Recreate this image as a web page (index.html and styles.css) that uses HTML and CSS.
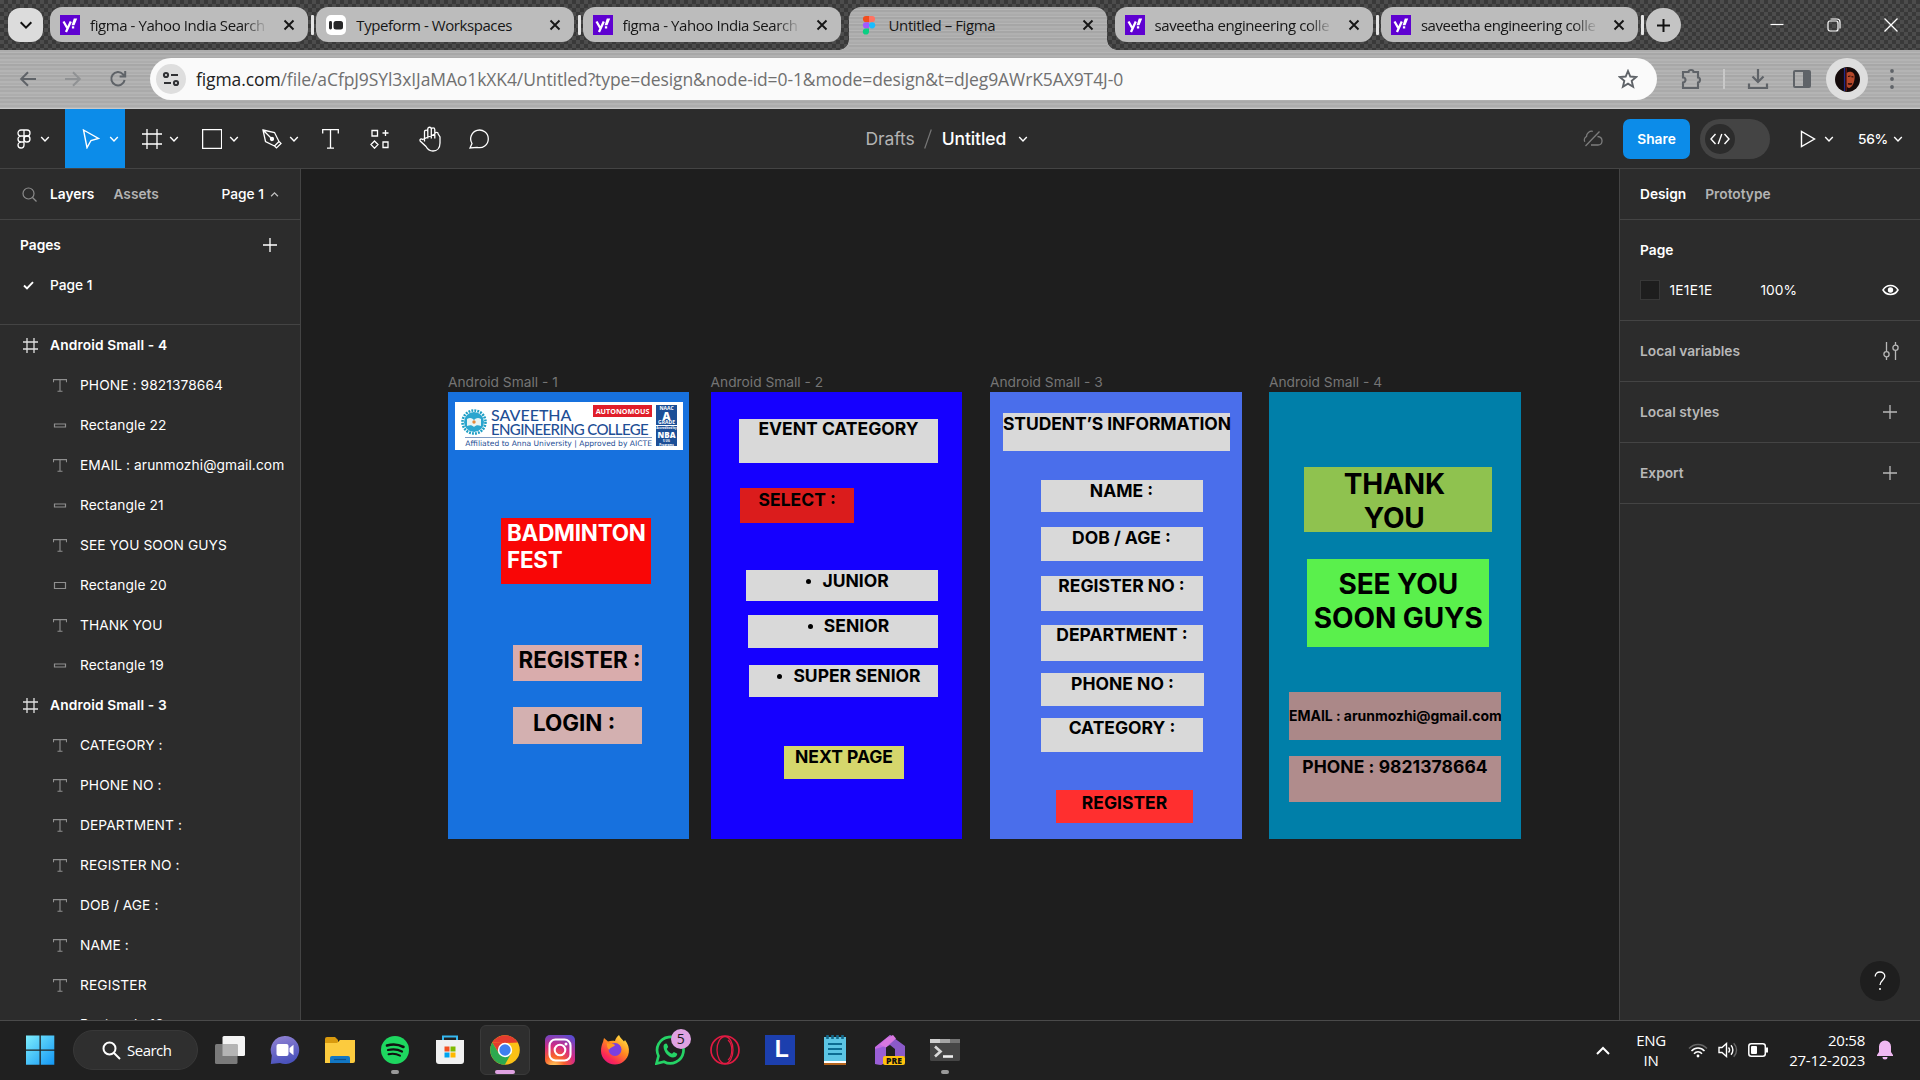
FILE: index.html
```html
<!DOCTYPE html>
<html lang="en">
<head>
<meta charset="utf-8">
<title>Untitled – Figma</title>
<link rel="stylesheet" href="styles.css">
</head>
<body>
<svg class="defs" width="0" height="0">
  <symbol id="chev" viewBox="0 0 10 10"><path d="M1.2 3l3.8 3.9L8.800 3" fill="none" stroke="currentColor" stroke-width="1.4"/></symbol>
  <symbol id="x" viewBox="0 0 12 12"><path d="M1.500 1.500l9 9M10.500 1.500l-9 9" fill="none" stroke="currentColor" stroke-width="1.900"/></symbol>
  <symbol id="yahoo" viewBox="0 0 20 20"><path fill="#5f01d1" d="M0 0h20v20H0z"/><path fill="none" stroke="#fff" stroke-width="2.300" d="M3.500 6.500l3.600 6.300M10.800 6.500L6 17"/><path fill="#fff" d="M13.800 3.500h3.400l-2.700 6.800h-2.900zM11.900 11.200h2.300v2.400h-2.300z"/></symbol>
  <symbol id="t" viewBox="0 0 14 13"><path d="M.5 3.200V.6h13v2.600M7 .6v11.600M4.500 12.200h5" fill="none" stroke="currentColor" stroke-width="1.100"/></symbol>
  <symbol id="r" viewBox="0 0 14 13"><path d="M1.500 5h11v3h-11z" fill="none" stroke="currentColor" stroke-width="1.200"/></symbol>
  <symbol id="r2" viewBox="0 0 14 13"><path d="M1.500 3.500h11v6h-11z" fill="none" stroke="currentColor" stroke-width="1.200"/></symbol>
  <symbol id="frame" viewBox="0 0 15 15"><path d="M4 0v15M11 0v15M0 4h15M0 11h15" fill="none" stroke="currentColor" stroke-width="1.300"/></symbol>
  <symbol id="plus" viewBox="0 0 14 14"><path d="M7 0v14M0 7h14" fill="none" stroke="currentColor" stroke-width="1.300"/></symbol>
</svg>

<header class="tabstrip">
  <button class="tabsearch"><svg width="14" height="14"><use href="#chev"/></svg></button>
  <div class="tab"><svg class="fav" width="20" height="20"><use href="#yahoo"/></svg><span class="ttl fade">figma - Yahoo India Search</span><svg class="cls" width="12" height="12"><use href="#x"/></svg></div>
  <i class="sep"></i>
  <div class="tab"><svg class="fav" width="20" height="20" viewBox="0 0 20 20"><rect width="20" height="20" rx="5" fill="#fff"/><rect x="3" y="6" width="3" height="8.500" rx="1.400" fill="#262627"/><rect x="7.500" y="6" width="9.500" height="8.500" rx="2.500" fill="#262627"/></svg><span class="ttl">Typeform - Workspaces</span><svg class="cls" width="12" height="12"><use href="#x"/></svg></div>
  <i class="sep"></i>
  <div class="tab"><svg class="fav" width="20" height="20"><use href="#yahoo"/></svg><span class="ttl fade">figma - Yahoo India Search</span><svg class="cls" width="12" height="12"><use href="#x"/></svg></div>
  <div class="tab active"><svg class="fav" width="20" height="20" viewBox="0 0 20 20"><path fill="#f24e1e" d="M10 1H7a3.100 3.100 0 0 0 0 6.200h3z"/><path fill="#ff7262" d="M10 1h3a3.100 3.100 0 0 1 0 6.200h-3z"/><path fill="#a259ff" d="M10 7.200H7a3.100 3.100 0 0 0 0 6.200h3z"/><circle cx="13.100" cy="10.300" r="3.100" fill="#1abcfe"/><path fill="#0acf83" d="M10 13.400H7a3.100 3.100 0 1 0 3 3.100z"/></svg><span class="ttl">Untitled – Figma</span><svg class="cls" width="12" height="12"><use href="#x"/></svg></div>
  <div class="tab"><svg class="fav" width="20" height="20"><use href="#yahoo"/></svg><span class="ttl fade">saveetha engineering colle</span><svg class="cls" width="12" height="12"><use href="#x"/></svg></div>
  <i class="sep"></i>
  <div class="tab last"><svg class="fav" width="20" height="20"><use href="#yahoo"/></svg><span class="ttl fade">saveetha engineering colle</span><svg class="cls" width="12" height="12"><use href="#x"/></svg></div>
  <i class="sep"></i>
  <button class="newtab"><svg width="13" height="13" viewBox="0 0 13 13"><path d="M6.500 0v13M0 6.500h13" stroke="#111" stroke-width="2"/></svg></button>
  <div class="winctl">
    <svg width="14" height="14" viewBox="0 0 14 14"><path d="M.5 6.500h13" stroke="#fff" stroke-width="1.200"/></svg>
    <svg width="14" height="14" viewBox="0 0 14 14" fill="none" stroke="#fff" stroke-width="1.200"><rect x="1" y="3" width="10" height="10" rx="2"/><path d="M3.500 1H10a3 3 0 0 1 3 3v6.500"/></svg>
    <svg width="14" height="14" viewBox="0 0 14 14"><path d="M.5.5l13 13M13.500.5l-13 13" stroke="#fff" stroke-width="1.300"/></svg>
  </div>
</header>

<div class="navbar">
  <div class="navbtns">
    <svg width="20" height="20" viewBox="0 0 20 20" fill="none" stroke="#5f6368" stroke-width="2"><path d="M18 10H3.500M10 3.200L3.200 10l6.800 6.800"/></svg>
    <svg width="20" height="20" viewBox="0 0 20 20" fill="none" stroke="#909294" stroke-width="2"><path d="M2 10h14.500M10 3.200l6.800 6.800-6.800 6.800"/></svg>
    <svg width="20" height="20" viewBox="0 0 20 20" fill="none" stroke="#5f6368" stroke-width="2"><path d="M16.600 11A6.700 6.700 0 1 1 15 5.300l1.800 1.900M17.200 2v5.600h-5.600"/></svg>
  </div>
  <div class="omnibox">
    <span class="siteinfo"><svg width="18" height="16" viewBox="0 0 18 16" fill="none" stroke="#303134" stroke-width="2"><circle cx="4" cy="4" r="2.100"/><path d="M9 4h7M2 12h7"/><circle cx="14" cy="12" r="2.100"/></svg></span>
    <span class="url"><b>figma.com</b>/file/aCfpJ9SYl3xIJaMAo1kXK4/Untitled?type=design&amp;node-id=0-1&amp;mode=design&amp;t=dJeg9AWrK5AX9T4J-0</span>
    <svg class="star" width="20" height="20" viewBox="0 0 20 20"><path d="M10 2l2.300 5.500 5.900.5-4.500 3.900 1.400 5.800L10 14.600l-5.100 3.100 1.400-5.800L1.800 8l5.900-.5z" fill="none" stroke="#5f6368" stroke-width="1.900"/></svg>
  </div>
  <div class="exts">
    <svg class="puz" width="24" height="24" viewBox="0 0 24 24"><path d="M4 5h5.500a2.500 2 0 0 1 5 0H19v5.500a2 2.500 0 0 1 0 5V21H4v-5.500a2.500 2.500 0 0 0 0-5z" fill="none" stroke="#5f6368" stroke-width="2.100"/></svg>
    <i></i>
    <svg class="dl" width="22" height="22" viewBox="0 0 22 22" fill="none" stroke="#5f6368" stroke-width="2.200"><path d="M11 1v13M5.500 8.500L11 14l5.500-5.500M2 15.500V20h18v-4.500"/></svg>
    <svg class="sp" width="20" height="20" viewBox="0 0 20 20"><rect x="2" y="2" width="16" height="16" rx="1" fill="none" stroke="#5f6368" stroke-width="2"/><path d="M11 2h7v16h-7z" fill="#5f6368"/></svg>
    <span class="avatar"><svg width="25" height="25" viewBox="0 0 25 25"><circle cx="12.500" cy="12.500" r="12.500" fill="#140a0a"/><path d="M11.500 6c4-3 8.500-.5 8.200 4-.2 5.500-2.500 10.500-5.500 11-2 0-2.700-2-2.700-4z" fill="#b5482a"/><path d="M13 9.500l2.500-.5M16.500 9.600l2 .4M13 16.500c1 1 3 1 4 0" stroke="#2a0d0a" stroke-width="1.200"/><path d="M9.500 1v23" stroke="#1c2c8c" stroke-width="1.200"/><path d="M11.200 1v23" stroke="#7a1a18"/></svg></span>
    <svg class="dots" width="4" height="22" viewBox="0 0 4 22" fill="#5f6368"><circle cx="2" cy="3" r="1.900"/><circle cx="2" cy="11" r="1.900"/><circle cx="2" cy="19" r="1.900"/></svg>
  </div>
</div>

<div class="toolbar">
  <div class="tools">
    <div class="tool w65"><svg width="14" height="20" viewBox="0 0 14 20" fill="none" stroke="#fff" stroke-width="1.300"><path d="M7 1H4a3 3 0 0 0 0 6h3zM7 1h3a3 3 0 0 1 0 6H7zM7 7H4a3 3 0 0 0 0 6h3zM7 13H4a3 3 0 1 0 3 3z"/><circle cx="10" cy="10" r="3"/></svg><svg class="cv" width="10" height="10"><use href="#chev"/></svg></div>
    <div class="tool w60 on"><svg width="18" height="20" viewBox="0 0 18 20"><path d="M1.500 1l15 8.500-7.500 2L5 18.700z" fill="none" stroke="#fff" stroke-width="1.400"/></svg><svg class="cv" width="10" height="10"><use href="#chev"/></svg></div>
    <div class="tool w60"><svg width="20" height="20" viewBox="0 0 20 20"><path d="M5 0v20M15 0v20M0 5h20M0 15h20" stroke="#fff" stroke-width="1.300"/></svg><svg class="cv" width="10" height="10"><use href="#chev"/></svg></div>
    <div class="tool w60"><svg width="20" height="20" viewBox="0 0 20 20"><rect x=".6" y=".6" width="19" height="18.800" fill="none" stroke="#fff" stroke-width="1.300"/></svg><svg class="cv" width="10" height="10"><use href="#chev"/></svg></div>
    <div class="tool w60"><svg width="20" height="20" viewBox="0 0 20 20" fill="none" stroke="#fff" stroke-width="1.300"><path d="M1 1l11.500 2.500 4.500 9-4.500 4.500-9-4.500zM1 1l8 8M12.800 17.200l1.700 1.700 4.500-4.500-1.700-1.700"/><circle cx="10" cy="10" r="1.500" fill="#fff"/></svg><svg class="cv" width="10" height="10"><use href="#chev"/></svg></div>
    <div class="tool w50"><svg width="17" height="20" viewBox="0 0 17 20"><path d="M.7 4.500V.7h15.600v3.800M8.500.7v18.500M5 19.200h7" fill="none" stroke="#fff" stroke-width="1.300"/></svg></div>
    <div class="tool w50"><svg width="20" height="20" viewBox="0 0 20 20" fill="none" stroke="#fff" stroke-width="1.300"><path d="M2 1.500h5.500V7H2zM13 13h5v5.500h-5zM15.500 1v6M12.500 4h6M4.500 12L8 15.600l-3.500 3.600L1 15.600z"/></svg></div>
    <div class="tool w50"><svg width="23" height="26" viewBox="0 0 23 26" fill="none" stroke="#fff" stroke-width="1.300"><path d="M5.500 15.500V5.700a1.600 1.600 0 0 1 3.300 0V12.500 3a1.700 1.700 0 0 1 3.500 0v9.500V3.700a1.700 1.700 0 0 1 3.500 0V12.500M15.800 8a1.700 1.700 0 0 1 3.400 0l1.800 3V17c0 5-3 8-7 8-4 0-5.500-1.700-7-4.500L1.200 15c-.8-1.800 1-2.800 2.300-1.500z"/></svg></div>
    <div class="tool w50"><svg width="22" height="20" viewBox="0 0 22 20"><path d="M1 19l2-4.500A8.800 8.800 0 1 1 8 18.300z" fill="none" stroke="#fff" stroke-width="1.300"/></svg></div>
  </div>
  <div class="doc"><span class="drafts">Drafts</span><svg width="8" height="20" viewBox="0 0 8 20"><path d="M7.300.5L.7 19.500" stroke="#777" stroke-width="1.200"/></svg><span>Untitled</span><svg class="dcv" width="10" height="10"><use href="#chev"/></svg></div>
  <div class="actions">
    <svg width="20" height="20" viewBox="0 0 20 20" fill="none" stroke="#7d7d7d" stroke-width="1.300"><path d="M2.500 17L16.500 2.500M1.800 12.800a4 4 0 0 1 1.700-5.300C3.500 4 6.500 1.800 9.800 2.300M14.500 7.500c3 .3 4.700 2.200 4.500 4.700s-2 3.800-4 3.800H8"/></svg>
    <button class="share">Share</button>
    <div class="toggle"><span><svg width="20" height="12" viewBox="0 0 20 12" fill="none" stroke="#fff" stroke-width="1.400"><path d="M5.500 1L1 6l4.500 5M14.500 1L19 6l-4.500 5M11.800 1L8.200 11"/></svg></span></div>
    <svg class="play" width="16" height="18" viewBox="0 0 16 18"><path d="M1.500 1.500v15L14.500 9z" fill="none" stroke="#fff" stroke-width="1.400"/></svg>
    <svg class="c1" width="10" height="10"><use href="#chev"/></svg>
    <span class="zoom">56%</span>
    <svg class="c2" width="10" height="10"><use href="#chev"/></svg>
  </div>
</div>

<main class="work">
  <aside class="left">
    <div class="ltabs"><svg width="15" height="15" viewBox="0 0 15 15" fill="none" stroke="#8c8c8c" stroke-width="1.200"><circle cx="6.500" cy="6.500" r="5.500"/><path d="M10.500 10.500l4 4"/></svg><b>Layers</b><b class="dim">Assets</b><span class="pg">Page 1</span><svg class="up" width="9" height="9"><use href="#chev"/></svg></div>
    <div class="pages">
      <div class="ph"><b>Pages</b><svg width="14" height="14"><use href="#plus"/></svg></div>
      <div class="prow"><svg width="11" height="9" viewBox="0 0 11 9"><path d="M1 4.500l3 3L10 1.200" fill="none" stroke="#fff" stroke-width="1.900"/></svg><span>Page 1</span></div>
    </div>
    <div class="layers">
      <div class="lr top"><svg width="15" height="15"><use href="#frame"/></svg>Android Small - 4</div>
      <div class="lr"><svg width="14" height="13"><use href="#t"/></svg>PHONE : 9821378664</div>
      <div class="lr"><svg width="14" height="13"><use href="#r"/></svg>Rectangle 22</div>
      <div class="lr"><svg width="14" height="13"><use href="#t"/></svg>EMAIL : arunmozhi@gmail.com</div>
      <div class="lr"><svg width="14" height="13"><use href="#r"/></svg>Rectangle 21</div>
      <div class="lr"><svg width="14" height="13"><use href="#t"/></svg>SEE YOU SOON GUYS</div>
      <div class="lr"><svg width="14" height="13"><use href="#r2"/></svg>Rectangle 20</div>
      <div class="lr"><svg width="14" height="13"><use href="#t"/></svg>THANK YOU</div>
      <div class="lr"><svg width="14" height="13"><use href="#r"/></svg>Rectangle 19</div>
      <div class="lr top"><svg width="15" height="15"><use href="#frame"/></svg>Android Small - 3</div>
      <div class="lr"><svg width="14" height="13"><use href="#t"/></svg>CATEGORY :</div>
      <div class="lr"><svg width="14" height="13"><use href="#t"/></svg>PHONE NO :</div>
      <div class="lr"><svg width="14" height="13"><use href="#t"/></svg>DEPARTMENT :</div>
      <div class="lr"><svg width="14" height="13"><use href="#t"/></svg>REGISTER NO :</div>
      <div class="lr"><svg width="14" height="13"><use href="#t"/></svg>DOB / AGE :</div>
      <div class="lr"><svg width="14" height="13"><use href="#t"/></svg>NAME :</div>
      <div class="lr"><svg width="14" height="13"><use href="#t"/></svg>REGISTER</div>
      <div class="lr end"><svg width="14" height="13"><use href="#r"/></svg>Rectangle 18</div>
    </div>
  </aside>

  <section class="canvas">
    <article class="board b1">
      <h2>Android Small - 1</h2>
      <div class="logo">
        <svg class="seal" width="26" height="26" viewBox="0 0 26 26"><circle cx="13" cy="13" r="11.500" fill="none" stroke="#1f9fc4" stroke-width="2.600" stroke-dasharray="1.900 1.110"/><circle cx="13" cy="13" r="10" fill="#2ba6cf"/><path d="M6 10c3-2 5-1 7 1 2-2 4-3 7-1v7c-3-1-5-1-7 1-2-2-4-2-7-1z" fill="#e8f4f4"/><circle cx="13" cy="13" r="1.700" fill="#e58a3c"/></svg>
        <div class="lname"><span class="l1">SAVEETHA</span><em>AUTONOMOUS</em><span class="l2">ENGINEERING COLLEGE</span><span class="l3">Affiliated to Anna University | Approved by AICTE</span></div>
        <div class="naac"><div><span>NAAC</span><strong>A</strong><span>GRADE</span></div><div class="nba"><small>Accredited by</small><strong>NBA</strong><small>5 UG Programs</small></div></div>
      </div>
      <div class="node n-bad">BADMINTON<br>FEST</div>
      <div class="node n-reg">REGISTER :</div>
      <div class="node n-log">LOGIN :</div>
    </article>
    <article class="board b2">
      <h2>Android Small - 2</h2>
      <div class="node n-event">EVENT CATEGORY</div>
      <div class="node n-select">SELECT :</div>
      <div class="node n-jun"><i></i>JUNIOR</div>
      <div class="node n-sen"><i></i>SENIOR</div>
      <div class="node n-sup"><i></i>SUPER SENIOR</div>
      <div class="node n-next">NEXT PAGE</div>
    </article>
    <article class="board b3">
      <h2>Android Small - 3</h2>
      <div class="node n-stu">STUDENT’S INFORMATION</div>
      <div class="node n-name">NAME :</div>
      <div class="node n-dob">DOB / AGE :</div>
      <div class="node n-rno">REGISTER NO :</div>
      <div class="node n-dep">DEPARTMENT :</div>
      <div class="node n-pno">PHONE NO :</div>
      <div class="node n-cat">CATEGORY :</div>
      <div class="node n-go">REGISTER</div>
    </article>
    <article class="board b4">
      <h2>Android Small - 4</h2>
      <div class="node n-thx">THANK<br>YOU</div>
      <div class="node n-see">SEE YOU<br>SOON GUYS</div>
      <div class="node n-mail">EMAIL : arunmozhi@gmail.com</div>
      <div class="node n-tel">PHONE : 9821378664</div>
    </article>
  </section>

  <aside class="right">
    <div class="rtabs"><b>Design</b><b class="dim">Prototype</b></div>
    <div class="rpage">
      <b>Page</b>
      <div class="fill"><i></i><span class="hex">1E1E1E</span><span>100%</span><svg width="17" height="12" viewBox="0 0 17 12"><path d="M1 6c3.500-6 11.500-6 15 0-3.500 6-11.500 6-15 0z" fill="none" stroke="#fff" stroke-width="1.500"/><circle cx="8.500" cy="6" r="2.700" fill="#fff"/></svg></div>
    </div>
    <div class="rrow vars"><b>Local variables</b><svg width="16" height="18" viewBox="0 0 16 18" fill="none" stroke="#b8b8b8" stroke-width="1.300"><path d="M3.500 0v9.500M3.500 15v3M12.500 0v3M12.500 8.500V18"/><circle cx="3.500" cy="12.200" r="2.600"/><circle cx="12.500" cy="5.800" r="2.600"/></svg></div>
    <div class="rrow"><b>Local styles</b><svg width="14" height="14"><use href="#plus"/></svg></div>
    <div class="rrow"><b>Export</b><svg width="14" height="14"><use href="#plus"/></svg></div>
    <button class="help"><svg width="12" height="20" viewBox="0 0 12 20"><path d="M1.200 5.500C1.200 2.800 3.200 1 6 1s4.800 1.800 4.800 4.300C10.800 9 6 9.500 6 14" fill="none" stroke="#fff" stroke-width="1.300"/><circle cx="6" cy="18" r="1" fill="#fff"/></svg></button>
  </aside>
</main>

<footer class="taskbar">
  <div class="start"><svg width="30" height="30" viewBox="0 0 30 30"><defs><linearGradient id="wg" x1="0" y1="0" x2="1" y2="1"><stop offset="0" stop-color="#7eeefd"/><stop offset="1" stop-color="#1397f5"/></linearGradient></defs><path fill="url(#wg)" d="M1 .5h13.500v14H1zM15.800.5h13.500v14H15.800zM1 15.700h13.500v14H1zM15.800 15.700h13.500v14H15.800z"/></svg></div>
  <div class="search"><svg width="19" height="19" viewBox="0 0 19 19" fill="none" stroke="#fff" stroke-width="2"><circle cx="7.500" cy="7.500" r="6"/><path d="M12 12l6 6"/></svg><span>Search</span></div>
  <div class="apps">
    <div class="app"><svg width="30" height="30" viewBox="0 0 30 30"><rect x="7.500" y="1" width="22.500" height="20" rx="1.500" fill="#f4f4f4"/><rect x="0" y="9" width="22.500" height="20" rx="1.500" fill="#7a7a7a"/><path d="M7.500 9h15v12h-15z" fill="#b4b4b4"/></svg></div>
    <div class="app"><svg width="30" height="30" viewBox="0 0 30 30"><defs><linearGradient id="cg" x1="0" y1="0" x2="0.300" y2="1"><stop offset="0" stop-color="#9585d4"/><stop offset="1" stop-color="#4b53bc"/></linearGradient></defs><path d="M15 1a14 14 0 1 1-5 27L.8 29l1-8.500A14 14 0 0 1 15 1z" fill="url(#cg)"/><rect x="6.500" y="9" width="12" height="12" rx="2" fill="#fff"/><path d="M19.500 13l4-3.200v10.400l-4-3.200z" fill="#fff"/></svg></div>
    <div class="app"><svg width="32" height="30" viewBox="0 0 32 30"><path d="M1 4a2 2 0 0 1 2-2h8l3 3v4H1z" fill="#d99a0e"/><path d="M1 8h12l3-3h15v21a2 2 0 0 1-2 2H1z" fill="#fccb3e"/><path d="M6 28v-5a2 2 0 0 1 2-2h16a2 2 0 0 1 2 2v5z" fill="#1277c4"/><path d="M10 24.500h12" stroke="#0b4f8a" stroke-width="1.200"/></svg></div>
    <div class="app"><svg width="30" height="30" viewBox="0 0 30 30"><circle cx="15" cy="15" r="14" fill="#1ed760"/><g fill="none" stroke="#111" stroke-linecap="round"><path d="M7 10.500c5.500-1.700 11.500-1.200 16.500 1.500" stroke-width="2.600"/><path d="M8 15c5-1.300 9.800-.8 14 1.500" stroke-width="2.200"/><path d="M8.500 19.300c4.300-1 8-.5 11.500 1.400" stroke-width="1.900"/></g></svg><i class="dot"></i></div>
    <div class="app"><svg width="30" height="30" viewBox="0 0 30 30"><path d="M8 6V1.500h14V6" fill="none" stroke="#35b7f0" stroke-width="2"/><path d="M1 5h28v21a3 3 0 0 1-3 3H4a3 3 0 0 1-3-3z" fill="#f1f1f1"/><path fill="#f25022" d="M9.500 11.500h5v5h-5z"/><path fill="#7fba00" d="M15.500 11.500h5v5h-5z"/><path fill="#00a4ef" d="M9.500 17.500h5v5h-5z"/><path fill="#ffb900" d="M15.500 17.500h5v5h-5z"/></svg></div>
    <div class="app cur"><svg width="30" height="30" viewBox="0 0 30 30"><circle cx="15" cy="15" r="14.800" fill="#fbc116"/><path d="M2.200 7.500A14.800 14.800 0 0 1 27.800 7.600L15 8z" fill="#e33b2e"/><path d="M2.200 7.500L15 8l-6 10.500z" fill="#e33b2e"/><path d="M2.200 7.500A14.800 14.800 0 0 0 14.800 29.800L21 18.800 9 18.500z" fill="#2da94f"/><circle cx="15" cy="15" r="7.200" fill="#fff"/><circle cx="15" cy="15" r="5.700" fill="#3e7fee"/></svg><i class="dot long"></i></div>
    <div class="app"><svg width="30" height="30" viewBox="0 0 30 30"><defs><radialGradient id="ig" cx=".3" cy="1.050" r="1.150"><stop offset="0" stop-color="#fed562"/><stop offset=".3" stop-color="#f9622c"/><stop offset=".6" stop-color="#d42b84"/><stop offset="1" stop-color="#5b4bd0"/></radialGradient></defs><rect width="30" height="30" rx="5" fill="url(#ig)"/><g fill="none" stroke="#fff" stroke-width="2.100"><rect x="4.500" y="4.500" width="21" height="21" rx="6"/><circle cx="15" cy="15" r="5.300"/></g><circle cx="21" cy="9" r="1.500" fill="#fff"/></svg></div>
    <div class="app"><svg width="30" height="30" viewBox="0 0 30 30"><defs><linearGradient id="fg" x1=".9" y1="0" x2=".2" y2="1"><stop offset="0" stop-color="#fff04a"/><stop offset=".45" stop-color="#ff8a1f"/><stop offset=".8" stop-color="#fb2a55"/><stop offset="1" stop-color="#e3137e"/></linearGradient></defs><path d="M3 7l1-4 4 3.500c2-.8 5-1 7-.5C15.500 3.500 17 1.500 19 0c1 3 4 5 5 6.500l1-1.500c3 4 4.500 8 3.800 12.500C27.700 25 21.500 29.500 15 29.500 7.500 29.500 1 23.500 1 16c0-3.500.8-6.500 2-9z" fill="url(#fg)"/><circle cx="15" cy="14.500" r="6.500" fill="#7b3fe0"/><path d="M7 8c3 1.500 6 0 8 2-1 2-4 1.500-6 5-1.500-2-2.500-4-2-7z" fill="#ff9a22"/></svg></div>
    <div class="app"><svg width="30" height="30" viewBox="0 0 30 30"><path d="M1.500 28.500L3.500 21A13.200 13.200 0 1 1 9 26.700z" fill="none" stroke="#25d366" stroke-width="2.700"/><path d="M8.500 11c1-3 3.300-2.800 3.700-1.500l1 2.500-1.400 2c1.200 2.500 3 4 5.200 4.800l1.900-1.800 3 1.500c1 .6-.5 4-3.900 4-4.500-.3-9.500-5.500-9.500-11.500z" fill="#25d366"/></svg><b class="badge">5</b></div>
    <div class="app"><svg width="30" height="30" viewBox="0 0 30 30" fill="none" stroke="#e01a42"><circle cx="15" cy="15" r="14" stroke-width="1.700"/><ellipse cx="15" cy="15" rx="8" ry="13.500" stroke-width="1.300"/><path d="M18 5c5 4 5 16 0 20" stroke-width="1.200"/></svg></div>
    <div class="app"><span class="ell">L</span></div>
    <div class="app"><svg width="24" height="30" viewBox="0 0 24 30"><path d="M1 2h22v26H1z" fill="#5cc5e4"/><path d="M1 26h22v2H1z" fill="#fff"/><path d="M1 28h22v2H1z" fill="#b5651d"/><path d="M5 9h14M5 14h14M5 19h14" stroke="#0c6c92" stroke-width="1.800"/><path d="M4.500 0v4M9.500 0v4M14.500 0v4M19.500 0v4" stroke="#15698b" stroke-width="2.600"/></svg></div>
    <div class="app"><svg width="30" height="30" viewBox="0 0 30 30"><path d="M0 29V12L15 0l5 3-9 9v15l-4 2.500z" fill="#c56be4"/><path d="M0 29V14l11-3v15l-5 4z" fill="#9a5fd6"/><path d="M15 0l15 11v11H20V14l-5-4-4 2z" fill="#8b5ac9"/><path d="M12 3L18 0l3 3.500-10 9-6-3z" fill="#d878e0"/></svg><b class="pre">PRE</b></div>
    <div class="app"><svg width="30" height="24" viewBox="0 0 30 24"><rect y="1" width="30" height="22" rx="1.500" fill="#454545"/><path d="M0 1h10v4H0z" fill="#d0d0d0"/><path d="M10 1h10v4H10z" fill="#a5a5a5"/><path d="M20 1h10v4H20z" fill="#737373"/><path d="M5 8.500l5.500 5L5 18.500" fill="none" stroke="#d8d8d8" stroke-width="2.700"/><path d="M13 18.500h10" stroke="#eee" stroke-width="2.600"/></svg><i class="dot"></i></div>
  </div>
  <div class="tray">
    <svg class="tchev" width="14" height="9" viewBox="0 0 14 9"><path d="M1 8l6-6 6 6" fill="none" stroke="#fff" stroke-width="2"/></svg>
    <div class="lang">ENG<br>IN</div>
    <svg class="wifi" width="20" height="16" viewBox="0 0 20 16" fill="none" stroke="#fff" stroke-width="1.500"><path d="M1 6.500c5-5.500 13-5.500 18 0" stroke="#666"/><path d="M3.500 9c3.700-4 9.300-4 13 0M6 11.700c2.300-2.500 5.700-2.500 8 0"/><circle cx="10" cy="14" r="1.400" fill="#fff" stroke="none"/></svg>
    <svg class="vol" width="20" height="16" viewBox="0 0 20 16" fill="none" stroke="#fff" stroke-width="1.400"><path d="M1 5.500h3l4.500-4v13L4 10.500H1zM10.500 5.500c1.300 1.500 1.300 3.500 0 5M13 3.300c2.500 2.700 2.500 6.700 0 9.400"/><path d="M15.700 1.200c3.800 4 3.800 9.600 0 13.600" stroke="#666"/></svg>
    <svg class="bat" width="21" height="14" viewBox="0 0 21 14"><rect x=".8" y=".8" width="16.500" height="12.400" rx="2.500" fill="none" stroke="#fff" stroke-width="1.500"/><rect x="3" y="3" width="6" height="8" rx="1" fill="#fff"/><path d="M18 4.500h2v5h-2z" fill="#fff"/></svg>
    <div class="clock">20:58<br>27-12-2023</div>
    <svg width="16" height="20" viewBox="0 0 16 20"><path d="M8 .5a6 6 0 0 1 6 6V12l2 3v1H0v-1l2-3V6.500a6 6 0 0 1 6-6zM5.500 17h5a2.500 2.500 0 0 1-5 0z" fill="#f0b8f2"/></svg>
  </div>
</footer>
</body>
</html>
```

FILE: styles.css
```css
* { box-sizing: border-box; }
body {
  margin: 0;
  width: 1920px;
  height: 1080px;
  overflow: hidden;
  display: flex;
  flex-direction: column;
  background: #1e1e1e;
  color: #fff;
  font: 500 13.75px/20px Inter, "Liberation Sans", sans-serif;
}
svg { display: block; flex: none; }
.defs { position: absolute; }
button { border: 0; padding: 0; color: inherit; font: inherit; display: flex; align-items: center; justify-content: center; }
i { font-style: normal; }

/* Browser tab strip */
.tabstrip {
  height: 50px;
  flex: none;
  display: flex;
  padding: 7px 22px 0 8px;
  background: repeating-conic-gradient(#393939 0 25%, #4c4c4c 0 50%) 0 0 / 8px 8px;
  font: 400 15px/20px "Open Sans", sans-serif;
  color: #161616;
}
.tabsearch { width: 35px; height: 34px; margin: 1px 7px 0 0; border-radius: 12px; background: #dcdcdc; color: #111; }
.tab { width: 258px; height: 35px; flex: none; display: flex; align-items: center; padding: 0 13px 0 10px; border-radius: 12px; background: #bcbcbc; }
.tab.last { width: 257px; }
.fav { margin-right: 10px; }
.ttl { flex: 1; overflow: hidden; white-space: nowrap; letter-spacing: -0.42px; }
.fade { -webkit-mask-image: linear-gradient(90deg, #000 86%, transparent); mask-image: linear-gradient(90deg, #000 86%, transparent); }
.cls { margin-left: 15px; }
.sep { width: 3px; height: 20px; flex: none; margin: 8px 2px 0 3.300px; background: #e4e4e4; border-radius: 1px; }
.tab.active {
  position: relative;
  height: 43px;
  margin: 0 8px;
  padding: 0 13px 8px 10px;
  border-radius: 12px 12px 0 0;
  background: repeating-linear-gradient(#ababab 0 2px, #b5b5b5 2px 3px, #a6a6a6 3px 5px, #b0b0b0 5px 7px);
}
.tab.active::before, .tab.active::after { content: ""; position: absolute; bottom: 0; width: 10px; height: 10px; }
.tab.active::before { left: -10px; background: radial-gradient(circle at 0 0, transparent 9.500px, #adadad 10px); }
.tab.active::after { right: -10px; background: radial-gradient(circle at 100% 0, transparent 9.500px, #adadad 10px); }
.newtab { width: 35px; height: 34px; margin: 1px 0 0; border-radius: 17px; background: #c4c4c4; }
.winctl { margin-left: auto; height: 36px; display: flex; align-items: center; gap: 43px; }

/* Navigation bar */
.navbar {
  height: 59px;
  flex: none;
  display: flex;
  align-items: center;
  background: repeating-linear-gradient(#adadad 0 2px, #b6b6b6 2px 3px, #a7a7a7 3px 5px, #b1b1b1 5px 7px, #aaa 7px 9px, #b4b4b4 9px 11px);
  border-bottom: 1px solid #c9c9c9;
}
.navbtns { width: 150px; display: flex; gap: 25px; padding-left: 18px; }
.omnibox { width: 1507px; height: 42px; display: flex; align-items: center; padding: 0 19px 0 6px; border-radius: 21px; background: #fafafa; }
.siteinfo { width: 30px; height: 30px; border-radius: 50%; background: #dedede; display: flex; align-items: center; justify-content: center; }
.url { flex: 1; margin-left: 10px; font: 400 17.500px/26px "Open Sans", sans-serif; letter-spacing: -0.1px; color: #707070; white-space: nowrap; }
.url b { font-weight: 400; color: #222; }
.exts { display: flex; align-items: center; }
.puz { margin-left: 22px; }
.exts i { width: 2px; height: 20px; margin: 0 22px 0 20px; background: #c8c8c8; }
.sp { margin-left: 23px; }
.avatar { width: 42px; height: 42px; margin: 0 22px 0 14px; border-radius: 50%; background: #dedede; display: flex; align-items: center; justify-content: center; }

/* Figma toolbar */
.toolbar { height: 60px; flex: none; display: grid; grid-template-columns: 865.500px 1fr 337px; align-items: center; background: #2c2c2c; border-bottom: 1px solid #444; }
.tools { display: flex; }
.tool { height: 59px; display: flex; align-items: center; justify-content: center; gap: 7px; }
.tool.on { background: #0c8ce9; }
.w65 { width: 65px; padding-left: 2px; gap: 9px; }
.w60 { width: 60px; padding-left: 10px; }
.on { padding-left: 10px; gap: 9px; }
.w50 { width: 50px; }
.doc { display: flex; align-items: center; font-size: 17.500px; letter-spacing: -0.1px; }
.drafts { color: #b3b3b3; font-weight: 400; }
.doc svg { margin: 0 10px 0 9px; }
.doc .dcv { margin: 0 0 0 12px; }
.actions { display: flex; align-items: center; }
.share { width: 67px; height: 40px; margin: 0 10px 0 20px; border-radius: 7px; background: #0c8ce9; font-weight: 600; }
.toggle { width: 70px; height: 40px; border-radius: 20px; background: #444; padding: 5px; }
.toggle span { width: 30px; height: 30px; border-radius: 50%; background: #2c2c2c; display: flex; align-items: center; justify-content: center; }
.play { margin-left: 30px; }
.c1 { margin: 0 24px 0 8px; }
.zoom { width: 30px; font-weight: 500; letter-spacing: -0.3px; }
.c2 { margin-left: 5px; }

.work { height: 851px; flex: none; display: grid; grid-template-columns: 301px 1fr 301px; }

/* Layers panel */
.left { height: 851px; overflow: hidden; background: #2c2c2c; border-right: 1px solid #444; }
b { font-weight: 600; }
.dim { color: #b3b3b3; }
.ltabs { height: 51px; display: flex; align-items: center; padding: 0 21px 0 22px; border-bottom: 1px solid #444; }
.ltabs b { margin-left: 13px; }
.ltabs .dim { margin-left: 19px; }
.pg { margin-left: auto; }
.up { margin-left: 6px; transform: rotate(180deg); opacity: .7; }
.pages { height: 105px; border-bottom: 1px solid #444; padding-top: 5px; }
.ph { height: 40px; display: flex; align-items: center; justify-content: space-between; padding: 0 23px 0 20px; }
.prow { height: 40px; display: flex; align-items: center; padding-left: 23px; gap: 16px; }
.lr { height: 40px; display: flex; align-items: center; gap: 13px; padding-left: 53px; font-weight: 400; letter-spacing: 0.09px; white-space: nowrap; }
.lr svg { color: #8f8f8f; }
.lr.top { padding-left: 23px; gap: 12px; font-weight: 600; letter-spacing: 0.13px; }
.lr.top svg { color: #e0e0e0; }
.lr.end { margin-top: -1px; }

/* Design panel */
.right { position: relative; background: #2c2c2c; border-left: 1px solid #444; }
.rtabs { height: 51px; display: flex; align-items: center; gap: 19px; padding-left: 20px; border-bottom: 1px solid #444; }
.rpage { height: 101px; padding: 20px 21px 0 20px; border-bottom: 1px solid #444; }
.fill { height: 20px; margin-top: 20px; display: flex; align-items: center; font-weight: 400; }
.fill i { width: 20px; height: 20px; margin-right: 9.500px; background: #1e1e1e; border: 1px solid #383838; }
.hex { width: 91px; letter-spacing: 0.25px; }
.fill svg { margin-left: auto; }
.rrow { height: 61px; display: flex; align-items: center; justify-content: space-between; padding: 0 23px 0 20px; border-bottom: 1px solid #444; color: #b8b8b8; }
.vars { padding-right: 21.500px; }
.help { position: absolute; right: 20px; bottom: 19px; width: 40px; height: 40px; border-radius: 50%; background: #1e1e1e; }

/* Canvas boards */
.canvas { position: relative; background: #1e1e1e; }
.board { position: absolute; top: 223px; height: 447px; color: #000; }
.board h2 { position: absolute; left: 0; top: -20.500px; margin: 0; font: 400 13.75px/20px Inter, sans-serif; letter-spacing: 0; color: #757575; white-space: nowrap; }
.b1 { left: 147px; width: 241px; background: #1771de; }
.b2 { left: 409.600px; width: 251px; background: #1500ff; }
.b3 { left: 689px; width: 251.500px; background: #4a6eeb; }
.b4 { left: 968px; width: 251.500px; background: #007fa9; }
.node { position: absolute; text-align: center; white-space: nowrap; font: 700 17.500px/20px Inter, sans-serif; background: #d9d9d9; }
.node i { display: inline-block; width: 5px; height: 5px; margin: 0 11px 3px 0; border-radius: 50%; background: #000; }
.n-bad { left: 53px; top: 126px; width: 150px; height: 66px; padding: 1px 0 0 6px; text-align: left; font-size: 22.400px; letter-spacing: -0.2px; line-height: 27px; background: #f90606; color: #fff; }
.n-reg { left: 65px; top: 253px; width: 129px; height: 36px; padding: 1px 0 0 4px; font-size: 22.400px; line-height: 27px; background: #d9acac; }
.n-log { left: 65px; top: 315px; width: 129px; height: 37px; padding: 2px 7px 0 0; font-size: 22.400px; line-height: 27px; background: #d3b0b0; }
.n-event { left: 28.400px; top: 27px; width: 199px; height: 43.500px; }
.n-select { left: 29.400px; top: 96px; width: 114.500px; height: 35px; padding-top: 2px; background: #db1c1c; }
.n-jun { left: 35.500px; top: 178px; width: 192px; height: 30.500px; padding: 1px 0 0 11px; }
.n-sen { left: 37.400px; top: 223px; width: 190px; height: 33px; padding: 1px 0 0 11px; }
.n-sup { left: 38.400px; top: 273px; width: 189px; height: 31.500px; padding: 1px 0 0 11px; }
.n-next { left: 73.400px; top: 354px; width: 120px; height: 33px; padding-top: 1px; background: #d5d76c; }
.n-stu { left: 13px; top: 21px; width: 227px; height: 38px; padding-top: 1px; letter-spacing: -0.1px; }
.n-name { left: 50.500px; top: 87.500px; width: 162px; height: 32px; padding-top: 1px; }
.n-dob { left: 50.500px; top: 134.500px; width: 162px; height: 34.500px; padding-top: 1.500px; }
.n-rno { left: 50.500px; top: 184px; width: 162px; height: 34.500px; }
.n-dep { left: 51px; top: 232.500px; width: 162px; height: 36.500px; padding-top: .5px; }
.n-pno { left: 51px; top: 281px; width: 163px; height: 32.500px; padding-top: 1px; }
.n-cat { left: 51px; top: 325.500px; width: 162px; height: 34.500px; }
.n-go { left: 66px; top: 398px; width: 137px; height: 33px; padding-top: 3px; background: #ff2f2f; }
.n-thx { left: 34.500px; top: 74.500px; width: 188.500px; height: 65.500px; padding: 1.500px 7px 0 0; font-size: 28px; letter-spacing: -0.15px; line-height: 33.500px; background: #8fc24f; }
.n-see { left: 37.500px; top: 167px; width: 182.500px; height: 87.500px; padding: 9px 0 0 1px; font-size: 28px; letter-spacing: -0.1px; line-height: 33.500px; background: #5af04c; }
.n-mail { left: 20px; top: 300px; width: 212px; height: 48px; padding-top: 14px; font-size: 14px; letter-spacing: -0.04px; background: #ab8888; }
.n-tel { left: 20px; top: 364px; width: 212px; height: 46px; padding-top: 1px; letter-spacing: 0.05px; background: #b08c8c; }

/* College banner */
.logo { position: absolute; left: 7px; top: 10px; width: 228px; height: 48px; background: #fff; display: flex; padding: 3px 6px 0; }
.seal { margin-top: 4px; }
.lname { position: relative; width: 164px; margin-left: 4px; font: 500 16px/14px Lato, sans-serif; color: #1f4f96; white-space: nowrap; }
.l1 { position: absolute; left: 0; top: 3px; }
.l2 { position: absolute; left: 0; top: 17px; font-size: 15px; letter-spacing: -0.65px; }
.lname em { position: absolute; right: 3px; top: 0; width: 59px; height: 12px; background: #e01f2b; color: #fff; font: 700 7.200px/12px "Open Sans", sans-serif; text-align: center; }
.l3 { position: absolute; right: 3px; top: 32px; padding-top: 1px; border-top: 1px solid #7f9cc4; font: 500 7.600px/9px "DejaVu Sans", sans-serif; letter-spacing: 0; }
.naac { width: 21px; height: 42px; margin-left: 1px; display: flex; flex-direction: column; gap: 1px; font: 700 5px/5px "Open Sans", sans-serif; color: #fff; text-align: center; }
.naac div { height: 20px; background: #1c4f97; display: flex; flex-direction: column; align-items: center; justify-content: center; }
.naac strong { font-size: 11px; line-height: 9px; }
.naac .nba strong { font-size: 8px; }
.naac small { font-size: 3px; line-height: 4px; }

/* Windows taskbar */
.taskbar { height: 60px; flex: none; display: flex; align-items: center; padding-bottom: 1px; background: #202020; border-top: 1px solid #4a4a4a; font: 400 15px/20px "Open Sans", sans-serif; letter-spacing: -0.3px; }
.start { margin-left: 25px; }
.search { width: 125px; height: 40px; margin: 0 4.500px 0 18px; border-radius: 20px; background: #2f2f2f; border: 1px solid #383838; display: flex; align-items: center; padding-left: 28px; gap: 6px; letter-spacing: -0.5px; }
.apps { display: flex; }
.app { position: relative; width: 55px; height: 50px; display: flex; align-items: center; justify-content: center; }
.cur::before { content: ""; position: absolute; inset: 0 2.500px; border-radius: 6px; background: #2e2e2e; border: 1px solid #3a3a3a; }
.cur svg { position: relative; }
.dot { position: absolute; bottom: 1px; left: 23.500px; width: 8px; height: 4px; border-radius: 2px; background: #9a9a9a; }
.dot.long { left: 17.500px; width: 20px; background: #dfa2e2; }
.badge { position: absolute; left: 28px; top: 4px; width: 20px; height: 20px; border-radius: 50%; background: #dfa2e2; color: #1a1a1a; font: 400 14px/20px "Open Sans", sans-serif; text-align: center; }
.ell { width: 30px; height: 30px; background: #1c3fae; text-align: center; font: 700 23px/29px "Liberation Sans", sans-serif; padding-left: 3px; }
.pre { position: absolute; left: 20.500px; top: 31px; width: 22px; height: 9px; border-radius: 2px; background: #ffc20e; color: #111; font: 800 8.500px/9px "Open Sans", sans-serif; letter-spacing: 0; text-align: center; }
.tray { margin-left: auto; margin-right: 27px; display: flex; align-items: center; }
.lang { width: 40px; margin: 0 17px 0 21px; text-align: center; }
.vol { margin: 0 10px; }
.clock { width: 84px; margin: 0 12px; text-align: right; letter-spacing: -0.25px; }
```
